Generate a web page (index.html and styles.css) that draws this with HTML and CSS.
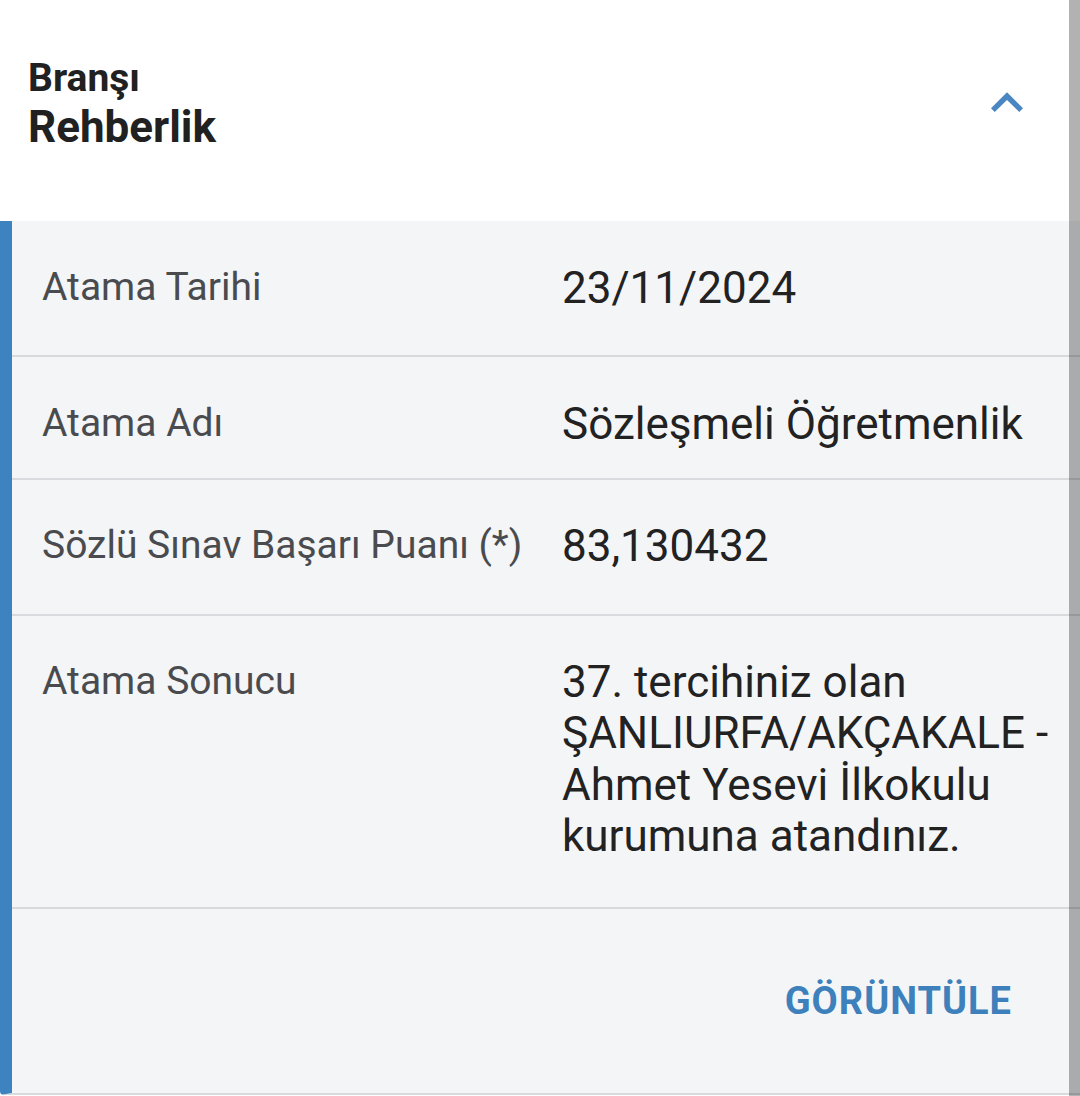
FILE: index.html
```html
<!DOCTYPE html>
<html lang="tr">
<head>
<meta charset="utf-8">
<title>Branşı - Rehberlik</title>
<link rel="stylesheet" href="styles.css">
</head>
<body>
<div class="page">
  <header class="head">
    <div class="head-text">
      <div class="branch-label">Branşı</div>
      <div class="branch-name">Rehberlik</div>
    </div>
    <svg class="chev" viewBox="0 0 24 24" aria-hidden="true"><path d="M12 8l-6 6 1.41 1.41L12 10.83l4.59 4.58L18 14z"/></svg>
  </header>
  <section class="card">
    <div class="row">
      <div class="label">Atama Tarihi</div>
      <div class="value">23/11/2024</div>
    </div>
    <div class="row row-short">
      <div class="label">Atama Adı</div>
      <div class="value">Sözleşmeli Öğretmenlik</div>
    </div>
    <div class="row row-mid">
      <div class="label">Sözlü Sınav Başarı Puanı (*)</div>
      <div class="value">83,130432</div>
    </div>
    <div class="row row-long">
      <div class="label">Atama Sonucu</div>
      <div class="value">37. tercihiniz olan ŞANLIURFA/AKÇAKALE - Ahmet Yesevi İlkokulu kurumuna atandınız.</div>
    </div>
    <div class="actions">
      <span class="btn">GÖRÜNTÜLE</span>
    </div>
  </section>
</div>
</body>
</html>
```
FILE: styles.css
```css
html, body {
  margin: 0;
  padding: 0;
  background: #f4f5f7;
}
body {
  font-family: Roboto, "Noto Sans", "Liberation Sans", sans-serif;
}
.page {
  position: relative;
  width: 1080px;
  height: 1096px;
  overflow: hidden;
  background: #ffffff;
}
.page::after {
  content: "";
  position: absolute;
  top: 0;
  right: 0;
  bottom: 0;
  width: 11px;
  background: rgba(0, 0, 0, 0.3);
}
.head {
  box-sizing: border-box;
  height: 221px;
  padding: 55px 41px 0 28px;
  display: flex;
  justify-content: space-between;
  align-items: flex-start;
  background: #ffffff;
}
.branch-label {
  font-size: 39px;
  line-height: 46px;
  font-weight: 700;
  color: #212121;
}
.branch-name {
  font-size: 44px;
  line-height: 52px;
  font-weight: 700;
  color: #212121;
}
.chev {
  width: 64px;
  height: 64px;
  margin-top: 16px;
  fill: #4a86c1;
}
.card {
  box-sizing: border-box;
  height: 874px;
  background: #f4f5f7;
  border-left: 12px solid #3d83c0;
  border-bottom: 2px solid #d9dadd;
  border-bottom-left-radius: 4px;
  display: flex;
  flex-direction: column;
}
.row {
  display: grid;
  grid-template-columns: 520px 1fr;
  align-items: start;
  padding: 42px 20px 40px 30px;
  border-bottom: 2px solid #d9dadd;
}
.row-short {
  padding-bottom: 28px;
}
.row-mid {
  padding-top: 41px;
  padding-bottom: 41px;
}
.row-long {
  padding-top: 41px;
  padding-bottom: 44px;
}
.label {
  font-size: 39px;
  line-height: 48px;
  color: #4a4b4e;
}
.value {
  font-size: 44px;
  line-height: 51.5px;
  color: #222222;
}
.actions {
  flex: 1;
  display: flex;
  justify-content: flex-end;
  align-items: center;
  padding-right: 68px;
}
.btn {
  font-size: 38px;
  line-height: 46px;
  font-weight: 700;
  letter-spacing: 1px;
  color: #3d80bb;
}
```
